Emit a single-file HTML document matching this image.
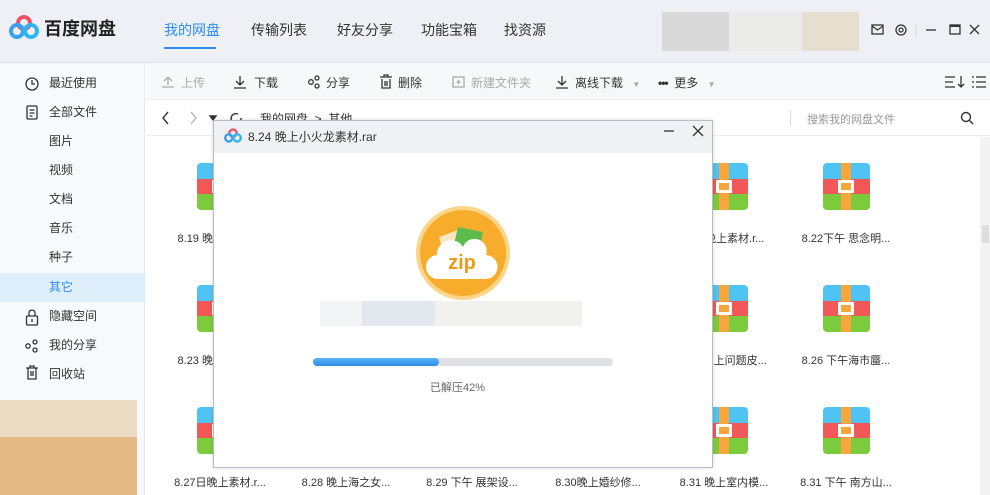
<!DOCTYPE html><html><head><meta charset="utf-8"><style>
*{margin:0;padding:0;box-sizing:border-box}
body{width:990px;height:495px;overflow:hidden;font-family:"Liberation Sans","Noto Sans CJK SC",sans-serif;background:#fff;position:relative;color:#333;font-size:12px}
.a{position:absolute}
.top{left:0;top:0;width:990px;height:63px;background:#eef0f5;border-bottom:1px solid #dfe2e8}
.nav{font-size:14px;color:#333;top:20px}
.side{left:0;top:63px;width:145px;height:432px;background:#f7f9fc;border-right:1px solid #e3e6eb}
.si{left:0;width:145px;height:29px;line-height:29px;font-size:12px;color:#333}
.tb{left:146px;top:63px;width:844px;height:37px;background:#f7f8fa;border-bottom:1px solid #eceef2}
.tbi{top:74px;font-size:12px;color:#333}
.rar{width:47px;height:47px;border-radius:4px;overflow:hidden}
.lbl{font-size:11px;color:#333;width:126px;text-align:center}
</style></head><body>
<div class="a top"></div>
<svg class="a" style="left:9px;top:15px" width="30" height="24" viewBox="0 0 30 24"><circle cx="15" cy="8" r="6" fill="none" stroke="#e9546b" stroke-width="4"/><circle cx="8" cy="16" r="6" fill="none" stroke="#3aa0f0" stroke-width="4"/><circle cx="22" cy="16" r="6" fill="none" stroke="#2fb6f0" stroke-width="4"/></svg>
<div class="a" style="left:44px;top:15px;font-size:18px;font-weight:bold;color:#222">百度网盘</div>
<div class="a nav" style="left:164px;color:#2c8ef0">我的网盘</div>
<div class="a" style="left:164px;top:47px;width:52px;height:2px;background:#2c8ef0"></div>
<div class="a nav" style="left:251px">传输列表</div>
<div class="a nav" style="left:337px">好友分享</div>
<div class="a nav" style="left:421px">功能宝箱</div>
<div class="a nav" style="left:504px">找资源</div>
<div class="a" style="left:662px;top:12px;width:67px;height:39px;background:#d9d9d9"></div>
<div class="a" style="left:729px;top:12px;width:73px;height:39px;background:#ebebe9"></div>
<div class="a" style="left:802px;top:12px;width:57px;height:39px;background:#e6dece"></div>
<svg class="a" style="left:870px;top:22px" width="110" height="16" viewBox="0 0 110 16" fill="none" stroke="#333" stroke-width="1.3"><rect x="2" y="3" width="11" height="9"/><path d="M2 4l5.5 4 5.5-4"/><circle cx="31" cy="8" r="5"/><circle cx="31" cy="8" r="2"/><path d="M46 2v12" stroke="#ddd"/><path d="M56 8h10"/><rect x="80" y="3" width="10" height="9"/><path d="M80 4h10" stroke-width="2"/><path d="M100 3l9 9M109 3l-9 9"/></svg>
<div class="a side"></div>
<div class="a si" style="top:69px;padding-left:49px">最近使用</div>
<div class="a si" style="top:98px;padding-left:49px">全部文件</div>
<div class="a si" style="top:127px;padding-left:49px">图片</div>
<div class="a si" style="top:156px;padding-left:49px">视频</div>
<div class="a si" style="top:185px;padding-left:49px">文档</div>
<div class="a si" style="top:214px;padding-left:49px">音乐</div>
<div class="a si" style="top:243px;padding-left:49px">种子</div>
<div class="a si" style="top:273px;height:29px;background:#deeefb;color:#2c8ef0;padding-left:49px">其它</div>
<div class="a si" style="top:302px;padding-left:49px">隐藏空间</div>
<div class="a si" style="top:331px;padding-left:49px">我的分享</div>
<div class="a si" style="top:360px;padding-left:49px">回收站</div>
<svg class="a" style="left:24px;top:76px" width="16" height="310" viewBox="0 0 16 310" fill="none" stroke="#333" stroke-width="1.3"><circle cx="8" cy="8" r="6"/><path d="M8 4v4h3"/><rect x="3" y="30" width="10" height="13" rx="1"/><path d="M5.5 34h5M5.5 37h5M5.5 40h3"/><rect x="2.5" y="240" width="11" height="9" rx="1"/><path d="M5 240v-3a3 3 0 016 0v3M8 243v3"/><circle cx="4" cy="270" r="2.2"/><circle cx="11" cy="266" r="2"/><circle cx="11" cy="274" r="2"/><path d="M2 292h12M6 292v-2h4v2M4 292v11h8v-11M7 295v5M9 295v5"/></svg>
<div class="a" style="left:0;top:400px;width:137px;height:37px;background:#ecdcc4"></div>
<div class="a" style="left:0;top:437px;width:137px;height:58px;background:#e3b984"></div>
<div class="a tb"></div>
<svg class="a" style="left:160px;top:74px" width="830" height="16" viewBox="0 0 830 16" fill="none" stroke="#333" stroke-width="1.3"><path d="M8 3v8M4 7l4-4 4 4M2 13h12" stroke="#aaa"/><path d="M80 2v9M76 7l4 4 4-4M74 14h12"/><circle cx="151" cy="8" r="2.3"/><circle cx="157" cy="4" r="2"/><circle cx="157" cy="12" r="2"/><path d="M220 3h12M224 3V1h4v2M222 5v9h8V5M225 7v5M227 7v5"/><rect x="293" y="3" width="11" height="10" stroke="#aaa"/><path d="M298.5 6v4M296.5 8h4" stroke="#aaa"/><path d="M402 2v9M398 7l4 4 4-4M396 14h12"/><path d="M472 4l-3 4 3 0z" stroke="none"/><path d="M785 3h10M785 8h8M785 13h10M801 2v11M798 10l3 3 3-3M812 3h2M812 8h2M812 13h2M816 3h10M816 8h10M816 13h10"/></svg>
<div class="a tbi" style="left:181px;color:#aaa">上传</div>
<div class="a tbi" style="left:254px">下载</div>
<div class="a tbi" style="left:326px">分享</div>
<div class="a tbi" style="left:398px">删除</div>
<div class="a tbi" style="left:471px;color:#aaa">新建文件夹</div>
<div class="a tbi" style="left:575px">离线下载 <span style="color:#aaa;font-size:8px;margin-left:6px">▼</span></div>
<div class="a tbi" style="left:658px"><b style="letter-spacing:-1px">•••</b>&nbsp; 更多 <span style="color:#aaa;font-size:8px;margin-left:6px">▼</span></div>
<div class="a" style="left:146px;top:100px;width:844px;height:36px;border-bottom:1px solid #eceef2"></div>
<svg class="a" style="left:158px;top:110px" width="90" height="16" viewBox="0 0 90 16" fill="none" stroke="#333" stroke-width="1.4"><path d="M10 2l-5 6 5 6"/><path d="M33 2l5 6-5 6" stroke="#bbb"/><path d="M52 6h6l-3 4z" fill="#333"/><path d="M80 4a5 5 0 10 3 4"/></svg>
<div class="a" style="left:260px;top:110px;font-size:12px">我的网盘 &nbsp;&gt;&nbsp; 其他</div>
<div class="a" style="left:790px;top:110px;width:1px;height:16px;background:#ddd"></div>
<div class="a" style="left:807px;top:111px;font-size:11px;color:#999">搜索我的网盘文件</div>
<svg class="a" style="left:960px;top:111px" width="14" height="14" fill="none" stroke="#333" stroke-width="1.4"><circle cx="6" cy="6" r="4.5"/><path d="M9.5 9.5l3.5 3.5"/></svg>
<div class="a" style="left:980px;top:137px;width:10px;height:358px;background:#f3f3f3"></div>
<div class="a" style="left:982px;top:225px;width:7px;height:18px;background:#ddd"></div>

<!-- grid -->
<div id="g"></div>
<script>
var rows=[163,285,407],cols=[197,323,449,575,701,823];
var labels=[["8.19 晚上素材.rar","","","","8.21晚上素材.r...","8.22下午 思念明..."],["8.23 晚上素材.rar","","","","8.25晚上问题皮...","8.26 下午海市蜃..."],["8.27日晚上素材.r...","8.28 晚上海之女...","8.29 下午 展架设...","8.30晚上婚纱修...","8.31 晚上室内模...","8.31 下午 南方山..."]];
var h="";
rows.forEach(function(y,r){cols.forEach(function(x,c){
h+='<div class="a rar" style="left:'+x+'px;top:'+y+'px"><div class="a" style="left:0;top:0;width:47px;height:16px;background:#4fc3f3"></div><div class="a" style="left:0;top:16px;width:47px;height:15px;background:#f25858"></div><div class="a" style="left:0;top:31px;width:47px;height:16px;background:#7ccb3c"></div><div class="a" style="left:18px;top:0;width:10px;height:47px;background:#f6a63a"></div><div class="a" style="left:15px;top:17px;width:16px;height:13px;border:3px solid #fff;background:#f6a63a"></div></div>';
h+='<div class="a lbl" style="left:'+(x-40)+'px;top:'+(y+67)+'px">'+labels[r][c]+'</div>';
});});
document.getElementById('g').innerHTML=h;
</script>

<!-- dialog -->
<div class="a" style="left:213px;top:120px;width:500px;height:348px;background:#fff;border:1px solid #b8bcc2;box-shadow:0 0 4px rgba(0,0,0,.15)"></div>
<div class="a" style="left:214px;top:121px;width:498px;height:32px;background:#f0f1f4"></div>
<svg class="a" style="left:224px;top:128px" width="18" height="15" viewBox="0 0 30 24"><circle cx="15" cy="8" r="6" fill="none" stroke="#e9546b" stroke-width="4"/><circle cx="8" cy="16" r="6" fill="none" stroke="#3aa0f0" stroke-width="4"/><circle cx="22" cy="16" r="6" fill="none" stroke="#2fb6f0" stroke-width="4"/></svg>
<div class="a" style="left:248px;top:128px;font-size:12px;color:#333">8.24 晚上小火龙素材.rar</div>
<svg class="a" style="left:660px;top:124px" width="46" height="14" fill="none" stroke="#333" stroke-width="1.3"><path d="M4 7h10"/><path d="M33 2l10 10M43 2l-10 10"/></svg>
<svg class="a" style="left:414px;top:204px" width="98" height="98" viewBox="0 0 98 98"><circle cx="49" cy="49" r="47" fill="#fdd58a"/><circle cx="49" cy="49" r="43" fill="#f8ac2c"/><path d="M25 33l22-8 6 20-22 8z" fill="#fbe6c4"/><path d="M44 23l25 5-5 22-25-5z" fill="#5cbb4a"/><path d="M25 75a12 12 0 01-2-24 14 14 0 0126-8 12 12 0 0123 8 11 11 0 01-1 24z" fill="#fff"/><text x="48" y="65" text-anchor="middle" font-family="Liberation Sans" font-weight="bold" font-size="20" fill="#f09a1a">zip</text></svg>
<div class="a" style="left:320px;top:301px;width:42px;height:25px;background:#f3f4f6"></div>
<div class="a" style="left:362px;top:301px;width:73px;height:25px;background:#e3e8ee"></div>
<div class="a" style="left:435px;top:301px;width:147px;height:25px;background:#f1f1f0"></div>
<div class="a" style="left:313px;top:358px;width:300px;height:8px;border-radius:4px;background:#dfe1e4"></div>
<div class="a" style="left:313px;top:358px;width:126px;height:8px;border-radius:4px;background:linear-gradient(#5cb4f5,#2a8ee8)"></div>
<div class="a" style="left:430px;top:379px;font-size:11px;color:#666">已解压42%</div>
</body></html>
